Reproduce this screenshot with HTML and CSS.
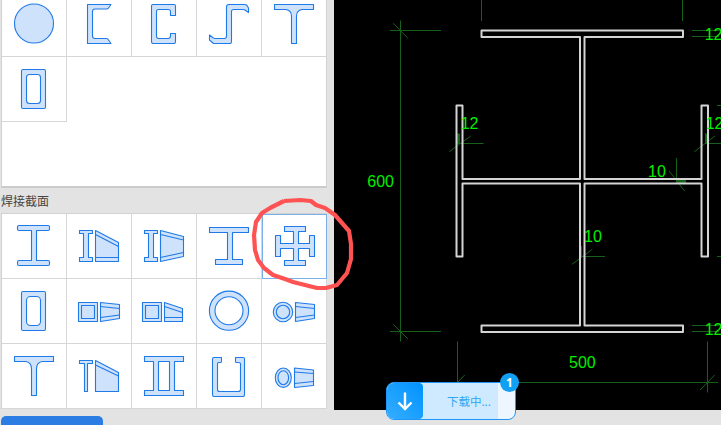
FILE: index.html
```html
<!DOCTYPE html>
<html lang="en">
<head>
    <meta charset="UTF-8">
    <meta name="viewport" content="width=device-width, initial-scale=1.0">
    <title>截面库</title>
    <link rel="stylesheet" href="styles.css">
</head>
<body>
    <main class="app">
        <aside class="side">
            <section class="panel-top">
                <div class="grid grid-clipped">
                    <div class="cell"><svg class="icon" viewBox="0 0 65 65"><circle cx="32" cy="32.5" r="19.5"/></svg></div>
                    <div class="cell"><svg class="icon" viewBox="0 0 65 65"><path d="M20.5 13.5H44L41.5 17Q41 18 39.5 18H28Q25.5 18 25.5 20.5V45Q25.5 47.5 28 47.5H39.5Q41 47.5 41.5 49L44 52.5H20.5Z"/></svg></div>
                    <div class="cell"><svg class="icon" viewBox="0 0 65 65"><path d="M21 13.5H42Q43.5 13.5 43.5 15V24.5H38.5V20.5Q38.5 18.5 36 18.5H26.5Q24.5 18.5 24.5 20.5V45Q24.5 47.5 26.5 47.5H36Q38.5 47.5 38.5 45V42.5H43.5V50.5Q43.5 52.5 42 52.5H21Q19.5 52.5 19.5 50.5V15Q19.5 13.5 21 13.5Z"/></svg></div>
                    <div class="cell"><svg class="icon" viewBox="0 0 65 65"><path d="M32 13.5H47.5Q49 13.5 50 14.5L51.5 17V21.5L47.5 18.8Q46.5 18.5 45 18.5H37Q34.5 18.5 34.5 20.5V50.5Q34.5 52.5 33 52.5H16.5L12.5 49V44L16 46.8Q17 47.5 18.5 47.5H27.5Q29.5 47.5 29.5 45V16Q29.5 13.5 32 13.5Z"/></svg></div>
                    <div class="cell"><svg class="icon" viewBox="0 0 65 65"><path d="M12.5 13.5H51.5V18.5H40Q34.5 19.5 34.5 25V52.5H29.5V25Q29.5 19.5 24 18.5H12.5Z"/></svg></div>
                    <div class="cell"><svg class="icon" viewBox="0 0 65 65"><rect x="19.5" y="12.5" width="24" height="39" rx="1.5"/><rect class="hole" x="24.5" y="17.5" width="14" height="29" rx="3"/></svg></div>
                </div>
            </section>

            <h2 class="group-title">焊接截面</h2>

            <section class="grid grid-welded">
                <div class="cell"><svg class="icon" viewBox="0 0 65 65"><path d="M17 11.5H46Q47.5 11.5 47.5 13V15Q47.5 16.5 46 16.5H34.5V46.5H46Q47.5 46.5 47.5 48V50Q47.5 51.5 46 51.5H17Q15.5 51.5 15.5 50V48Q15.5 46.5 17 46.5H29.5V16.5H17Q15.5 16.5 15.5 15V13Q15.5 11.5 17 11.5Z"/></svg></div>
                <div class="cell"><svg class="icon" viewBox="0 0 65 65"><path d="M12.5 16.5H25.5V19.5H21.5V43.5H25.5V47.5H12.5V43.5H16.5V19.5H12.5Z"/><path d="M28.5 16.5L51.5 28.5V47.5H28.5Z"/><path d="M28.5 20.5L51.5 32.5M28.5 43.5H51.5"/></svg></div>
                <div class="cell"><svg class="icon" viewBox="0 0 65 65"><path d="M12.5 16.5H25.5V19.5H21.5V43.5H25.5V47.5H12.5V43.5H16.5V19.5H12.5Z"/><path d="M28.5 16.5L51.5 22.5V42.5L28.5 47.5Z"/><path d="M28.5 20.5L51.5 26M28.5 43.5L51.5 38.5"/></svg></div>
                <div class="cell"><svg class="icon" viewBox="0 0 65 65"><path d="M12.5 13.5H51.5V18.5H35.5V45.5H45.5V50.5H18.5V45.5H30.5V18.5H12.5Z"/></svg></div>
                <div class="cell cell-active"><svg class="icon" viewBox="0 0 65 65"><path d="M22.5 12.5H43.5V17.5H36.5V29.5H47.5V21.5H52.5V42.5H47.5V34.5H36.5V46.5H43.5V51.5H22.5V46.5H31.5V34.5H18.5V42.5H13.5V21.5H18.5V29.5H31.5V17.5H22.5Z"/></svg></div>

                <div class="cell"><svg class="icon" viewBox="0 0 65 65"><rect x="19.5" y="12.5" width="24" height="39" rx="1.5"/><rect class="hole" x="24.5" y="17.5" width="14" height="29" rx="4"/></svg></div>
                <div class="cell"><svg class="icon" viewBox="0 0 65 65"><rect x="11.5" y="23.5" width="19" height="19"/><rect x="14.5" y="26.5" width="13" height="13"/><path d="M33.5 23.5L52.5 25.5V39.5L33.5 42.5Z"/><path d="M33.5 27.5L52.5 29.5M33.5 38.5L52.5 36"/></svg></div>
                <div class="cell"><svg class="icon" viewBox="0 0 65 65"><rect x="10.5" y="23.5" width="19" height="19"/><rect x="13.5" y="26.5" width="13" height="13"/><path d="M32.5 23.5L50.5 29.5V42.5H32.5Z"/><path d="M32.5 27.5L50.5 33.5M32.5 38.5H50.5"/></svg></div>
                <div class="cell"><svg class="icon" viewBox="0 0 65 65"><circle cx="32" cy="31.7" r="19.6"/><circle class="hole" cx="32" cy="31.7" r="14"/></svg></div>
                <div class="cell"><svg class="icon" viewBox="0 0 65 65"><circle cx="21" cy="33" r="9.7"/><circle cx="21" cy="33" r="6.7"/><path d="M33.5 23.5L52.5 25.5V39.5L33.5 42.5Z"/><path d="M33.5 27.5L52.5 29.5M33.5 38.5L52.5 36"/></svg></div>

                <div class="cell"><svg class="icon" viewBox="0 0 65 65"><path d="M12.5 12.5H51.5V17.5H40Q34.5 18.5 34.5 25V51.5H29.5V25Q29.5 18.5 24 17.5H12.5Z"/></svg></div>
                <div class="cell"><svg class="icon" viewBox="0 0 65 65"><path d="M12.5 16.5H25.5V19.5H20.5V47.5H17.5V19.5H12.5Z"/><path d="M28.5 16.5L51.5 28.5V47.5H28.5Z"/><path d="M28.5 21L51.5 32"/></svg></div>
                <div class="cell"><svg class="icon" viewBox="0 0 65 65"><path fill-rule="evenodd" d="M12.5 12.5H51.5V17.5H42.5V46.5H51.5V51.5H12.5V46.5H21.5V17.5H12.5ZM26.5 17.5V46.5H37.5V17.5Z"/></svg></div>
                <div class="cell"><svg class="icon" viewBox="0 0 65 65"><path d="M17 13.5H24.5V17Q24.5 18.5 23.5 18.5H21.5Q20.5 18.5 20.5 19.5V45.5Q20.5 47.5 22.5 47.5H41Q43.5 47.5 43.5 45.5V19.5Q43.5 18.5 41.5 18.5H39Q38.5 18.5 38.5 17V13.5H46Q47.5 13.5 47.5 15V50.5Q47.5 52.5 46 52.5H17Q15.5 52.5 15.5 50.5V15Q15.5 13.5 17 13.5Z"/></svg></div>
                <div class="cell"><svg class="icon" viewBox="0 0 65 65"><ellipse cx="21.3" cy="33.7" rx="8" ry="9.7"/><ellipse cx="21.3" cy="33.7" rx="5.3" ry="7"/><path d="M32.5 24L51.5 26V41.5L32.5 43.5Z"/><path d="M32.5 28L51.5 29.5M32.5 39.5L51.5 37.5"/></svg></div>
            </section>

            <button class="save-button">+ 保存到模型库</button>
        </aside>

        <section class="canvas">
            <svg class="drawing" viewBox="0 0 387 410">
                <g class="dim">
                    <path d="M66.5 20.5V341.5M56 30.5H107M59.3 23.3L74 38.3M56 331.5H107M59.3 324.3L74 339"/>
                    <path d="M147.5 0V21M348.5 0V21M358 30.5H385M358 36.5H385M358 325.5H385M358 331.5H385"/>
                    <path d="M123.5 341.5V382.5H373.5M373.5 341.5V392.5M373.5 382.5H384M366 390L380.7 375M123.5 382.5L130.7 375"/>
                    <path d="M124.5 143.5H149.5M115.3 151.7L136.7 136"/>
                    <path d="M372.5 143.5H387M360.3 151.7L381 136"/>
                    <path d="M342.5 158V183M335 171L350.7 191"/>
                    <path d="M246.5 256.5H271M238 264.3L258.3 249.3"/>
                    <path d="M383 105.5H387M383 256.5H387"/>
                    <path class="dim-heavy" d="M342.7 181.5H352M124.5 133.5V144M372.5 133.5V144M246.5 246V257"/>
                </g>
                <path class="beam" d="M147.5 30.5H349V37H250.5V179H367.5V105.5H374V256.5H367.5V183.5H250.5V325.5H349V332H147.5V325.5H246V183.5H128.5V256.5H122.5V105.5H128.5V179H246V37H147.5Z"/>
                <g class="dim-text">
                    <text x="33.3" y="187.3">600</text>
                    <text x="126.7" y="129.3">12</text>
                    <text x="371.7" y="129.3">12</text>
                    <text x="370.7" y="40">12</text>
                    <text x="370.7" y="335">12</text>
                    <text x="314" y="176.7">10</text>
                    <text x="250" y="241.7">10</text>
                    <text x="235" y="367.7">500</text>
                </g>
            </svg>
        </section>
    </main>

    <!-- hand drawn circle round the selected section -->
    <svg class="markup" viewBox="0 0 721 425">
        <path d="M284 201L300 200L311 201L316 205L325 208L335 215L342 223L349 231L351 244L351 259L347 273L337 285L326 288L317 288L305 285L293 282L285 279L273 275L264 268L258 260L255 250L254 235L256 222L262 213L270 208L284 201"/>
    </svg>

    <div class="download">
        <div class="download-icon">
            <svg viewBox="0 0 20 20"><path d="M10 1.5V18M3.5 11.5L10 18L16.5 11.5"/></svg>
        </div>
        <div class="download-bar"><span>下载中...</span></div>
        <div class="download-rest"></div>
        <span class="download-badge">1</span>
    </div>
</body>
</html>
```

FILE: styles.css
```css
body {
    font-family: "Noto Sans CJK SC", "Noto Sans", sans-serif;
    margin: 0;
    padding: 0;
    width: 721px;
    height: 425px;
    overflow: hidden;
    background-color: #e3e3e3;
    position: relative;
}

.app {
    display: flex;
    align-items: flex-start;
}

.side {
    width: 334px;
    height: 425px;
    padding-left: 1px;
    box-sizing: border-box;
    overflow: hidden;
}

.panel-top {
    width: 326px;
    height: 188px;
    box-sizing: border-box;
    background-color: white;
    border-left: 1px solid #d2d2d2;
    border-right: 1px solid #d2d2d2;
    border-bottom: 2px solid #cbcbcb;
    overflow: hidden;
}

.group-title {
    margin: 0;
    height: 25px;
    font-size: 12px;
    font-weight: normal;
    line-height: 26px;
    color: #444;
}

.grid {
    display: grid;
    grid-template-columns: repeat(5, 65px);
    grid-auto-rows: 65px;
    width: 326px;
    box-sizing: border-box;
    background-color: white;
    border-left: 1px solid #d2d2d2;
}

.grid-clipped {
    margin-top: -8px;
    border-left: none;
}

/* first row was measured one pixel higher */
.grid-clipped .cell:nth-child(-n+5) .icon {
    margin-top: -1px;
}

.grid-welded {
    height: 196px;
    border-top: 1px solid #d2d2d2;
    border-bottom: 1px solid #c4c4c4;
}

.cell {
    box-sizing: border-box;
    border-right: 1px solid #d6d6d6;
    border-bottom: 1px solid #d6d6d6;
}

.cell-active {
    outline: 1px solid #7ab0ea;
    outline-offset: -1px;
    border-color: #7ab0ea;
}

.icon {
    display: block;
    width: 65px;
    height: 65px;
}

.icon * {
    fill: #cfe2fb;
    stroke: #1f7ae8;
    stroke-width: 1.1;
    stroke-linejoin: round;
}

.icon .hole {
    fill: white;
}

.save-button {
    display: block;
    width: 102px;
    height: 30px;
    margin-top: 7px;
    padding: 3px 0 0;
    border: none;
    border-radius: 5px;
    background-color: #2b7de4;
    color: white;
    font-family: inherit;
    font-size: 12px;
    text-align: center;
}

.canvas {
    width: 387px;
    height: 410px;
    background-color: black;
}

.drawing {
    display: block;
    width: 387px;
    height: 410px;
}

.dim path {
    fill: none;
    stroke: #16601c;
    stroke-width: 1;
}

.dim .dim-heavy {
    stroke-width: 3;
}

.beam {
    fill: none;
    stroke: #d4d4d4;
    stroke-width: 2;
    stroke-linejoin: round;
}

.dim-text text {
    fill: #00ee00;
    font-family: "Liberation Sans", sans-serif;
    font-size: 16px;
}

.markup {
    position: absolute;
    left: 0;
    top: 0;
    width: 721px;
    height: 425px;
    pointer-events: none;
}

.markup path {
    fill: none;
    stroke: #ff5252;
    stroke-width: 4.2;
    stroke-linejoin: round;
}

/* download pill sits over the canvas and the bottom edge */
.download {
    position: absolute;
    left: 386px;
    top: 382px;
    width: 130px;
    height: 38px;
    box-sizing: border-box;
    display: flex;
    border: 1px solid #1e96fa;
    border-radius: 8px;
    background-color: #eef7ff;
}

.download-icon {
    width: 36px;
    display: flex;
    align-items: center;
    justify-content: center;
    background: linear-gradient(45deg, #35aeff, #0092ff);
    border-radius: 7px 4px 4px 7px;
}

.download-icon svg {
    width: 20px;
    height: 20px;
}

.download-icon path {
    fill: none;
    stroke: white;
    stroke-width: 2.4;
}

.download-bar {
    width: 75px;
    background-color: #cfe9ff;
    color: #2ca6f5;
    font-size: 11.5px;
    line-height: 37px;
    text-align: right;
    white-space: nowrap;
}

.download-bar span {
    padding-right: 7px;
}

.download-rest {
    flex: 1;
}

.download-badge {
    position: absolute;
    right: -4px;
    top: -10px;
    width: 19px;
    height: 19px;
    border-radius: 50%;
    background-color: #12a0f5;
    color: white;
    font-family: "Noto Sans", sans-serif;
    font-size: 12px;
    font-weight: bold;
    line-height: 19px;
    text-align: center;
}
```
